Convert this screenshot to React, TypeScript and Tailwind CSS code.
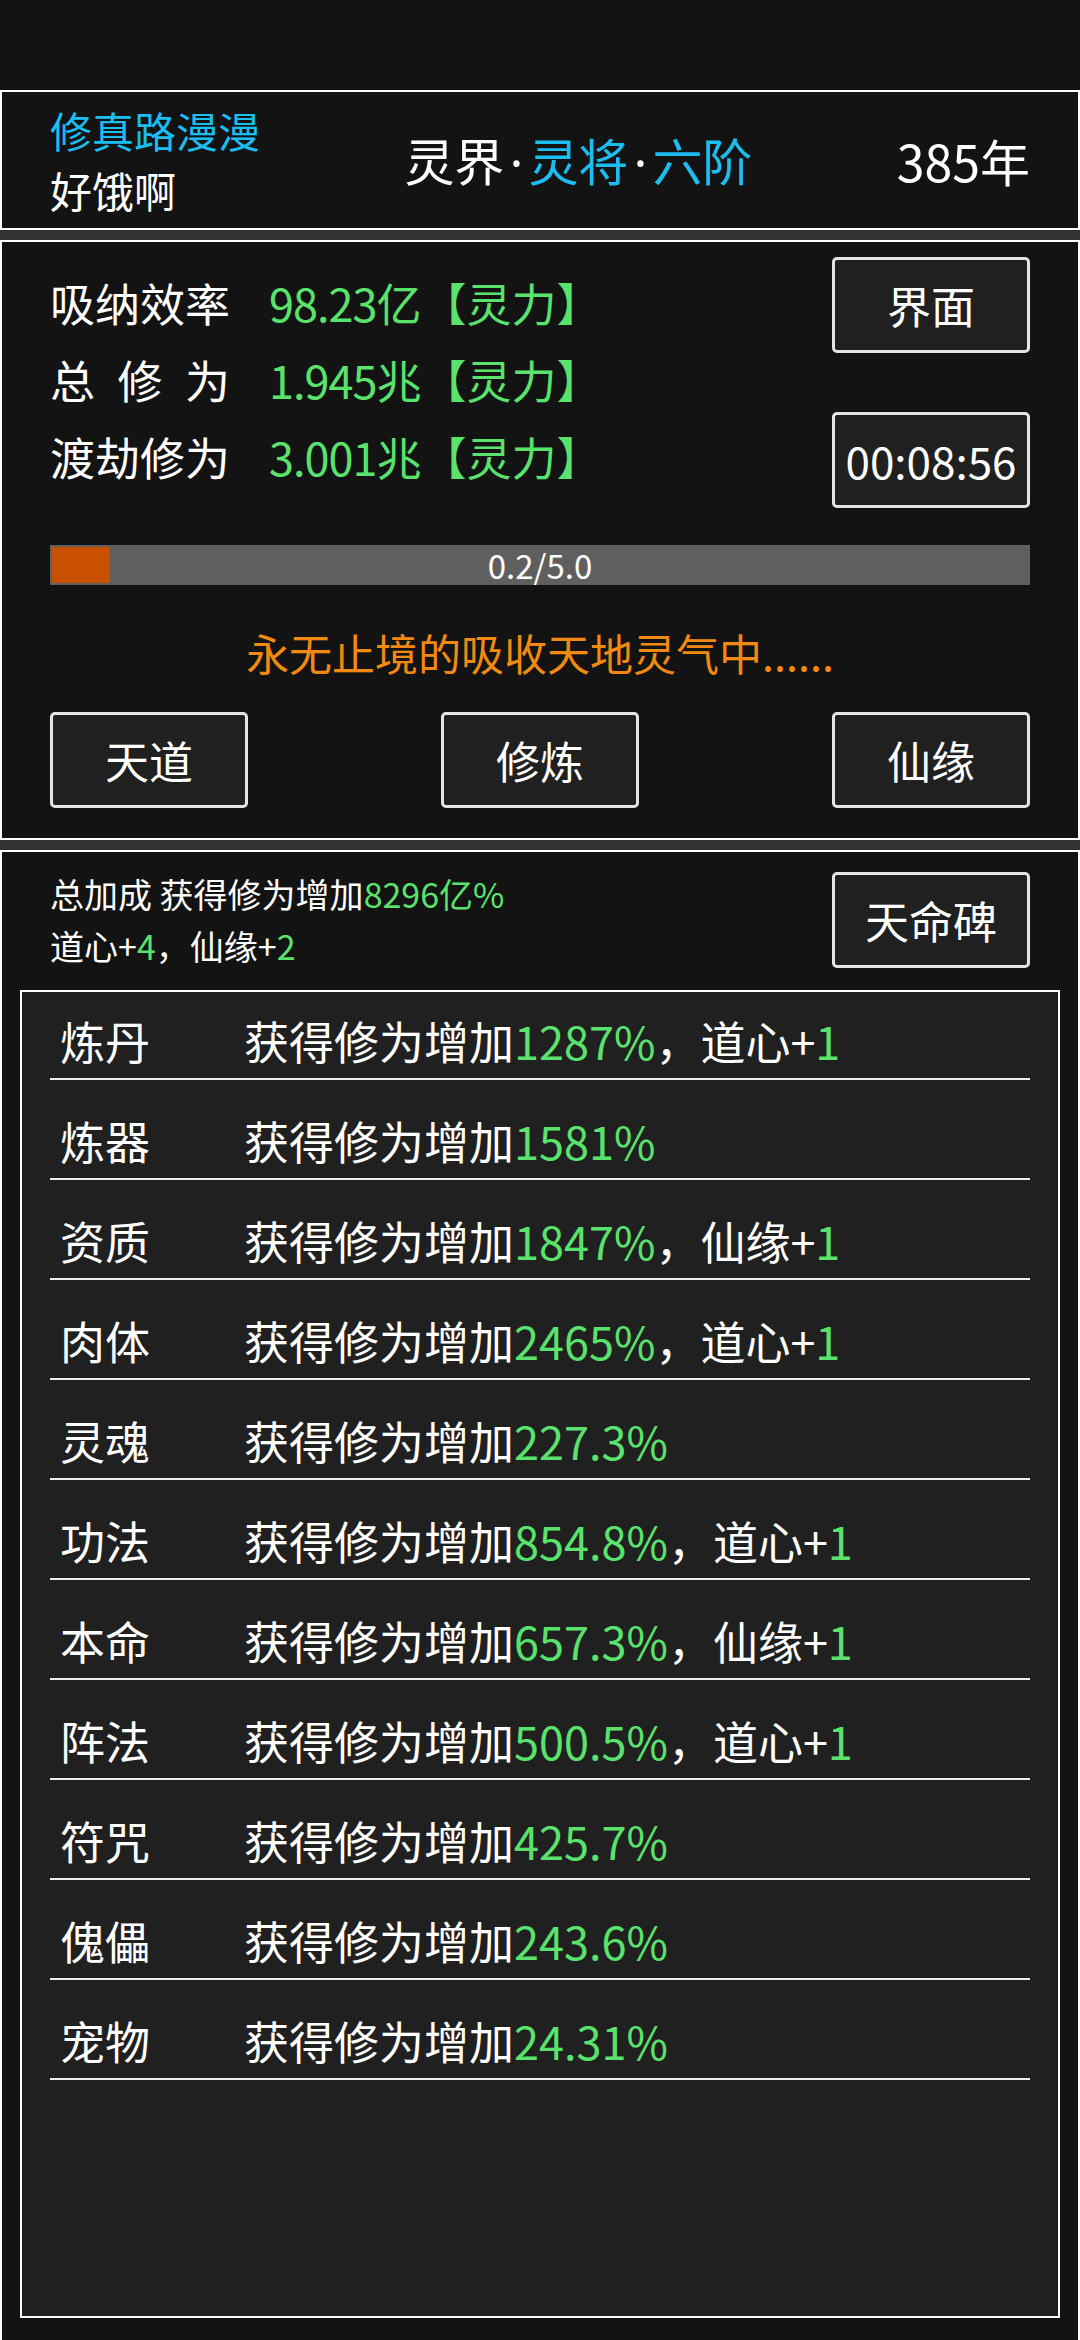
const G = "text-[#5ae36c]";

type Part = [string, boolean];

const rows: { name: string; parts: Part[] }[] = [
  { name: "炼丹", parts: [["1287%", true], ["，道心+", false], ["1", true]] },
  { name: "炼器", parts: [["1581%", true]] },
  { name: "资质", parts: [["1847%", true], ["，仙缘+", false], ["1", true]] },
  { name: "肉体", parts: [["2465%", true], ["，道心+", false], ["1", true]] },
  { name: "灵魂", parts: [["227.3%", true]] },
  { name: "功法", parts: [["854.8%", true], ["，道心+", false], ["1", true]] },
  { name: "本命", parts: [["657.3%", true], ["，仙缘+", false], ["1", true]] },
  { name: "阵法", parts: [["500.5%", true], ["，道心+", false], ["1", true]] },
  { name: "符咒", parts: [["425.7%", true]] },
  { name: "傀儡", parts: [["243.6%", true]] },
  { name: "宠物", parts: [["24.31%", true]] },
];

function Btn({ children, className = "" }: { children: React.ReactNode; className?: string }) {
  return (
    <div
      className={`w-[198px] h-[96px] rounded-[5px] border-[3px] border-[#e4e4e4] bg-[#202020] flex items-center justify-center text-white text-[44px] ${className}`}
    >
      {children}
    </div>
  );
}

function Stat({ label, value, unit }: { label: React.ReactNode; value: string; unit: string }) {
  return (
    <div className="flex items-center h-[77px]">
      <div className="w-[219px] text-white">{label}</div>
      <span className={G}>
        <span className="tracking-[-1px]">{value}</span>
        {unit}【灵力】
      </span>
    </div>
  );
}

function Dot() {
  return <span className="inline-block w-[24px] text-center font-['Noto_Sans',sans-serif]">·</span>;
}

export default function App() {
  return (
    <div className="w-[1080px] h-[2340px] overflow-hidden bg-[#121212] font-['Noto_Sans_CJK_SC','Noto_Sans',sans-serif] leading-none">
      <div className="h-[90px]" />

      {/* header */}
      <div className="h-[140px] border-2 border-white bg-[#131313] px-[48px] flex items-center justify-between">
        <div className="text-[42px] leading-[60px]">
          <div className="text-[#1cbdf0]">修真路漫漫</div>
          <div className="text-white">好饿啊</div>
        </div>
        <div className="text-[50px] text-white">
          灵界<Dot />
          <span className="text-[#1cbdf0]">灵将</span>
          <Dot />
          <span className="text-[#1cbdf0]">六阶</span>
        </div>
        <div className="text-[50px] text-white">385年</div>
      </div>

      <div className="h-[10px] bg-[#333333]" />

      {/* cultivation panel */}
      <div className="h-[600px] border-2 border-white bg-[#131313] px-[48px] pt-[15px]">
        <div className="flex justify-between">
          <div className="pt-[7px] text-[45px]">
            <Stat label="吸纳效率" value="98.23" unit="亿" />
            <Stat
              label={
                <div className="flex justify-between w-[180px]">
                  <span>总</span>
                  <span>修</span>
                  <span>为</span>
                </div>
              }
              value="1.945"
              unit="兆"
            />
            <Stat label="渡劫修为" value="3.001" unit="兆" />
          </div>
          <div className="flex flex-col gap-[59px]">
            <Btn>界面</Btn>
            <Btn>00:08:56</Btn>
          </div>
        </div>

        <div className="relative mt-[37px] h-[40px] bg-[#5f5f5f] p-[2px]">
          <div className="h-full w-[58px] bg-[#c85000]" />
          <div className="absolute inset-0 flex items-center justify-center text-white text-[33px]">0.2/5.0</div>
        </div>

        <div className="mt-[37px] text-center text-[43px] leading-[60px] text-[#f28a12]">
          永无止境的吸收天地灵气中......
        </div>

        <div className="mt-[30px] flex justify-between">
          <Btn>天道</Btn>
          <Btn>修炼</Btn>
          <Btn>仙缘</Btn>
        </div>
      </div>

      <div className="h-[10px] bg-[#333333]" />

      {/* bonus panel */}
      <div className="h-[1500px] border-x-2 border-t-2 border-white bg-[#131313]">
        <div className="pt-[16px] px-[48px] flex items-center justify-between">
          <div className="text-[34px] leading-[52px] text-white">
            <div>
              总加成 获得修为增加<span className={G}>8296亿%</span>
            </div>
            <div>
              道心+<span className={G}>4</span>，仙缘+<span className={G}>2</span>
            </div>
          </div>
          <Btn>天命碑</Btn>
        </div>

        <div className="mt-[18px] mx-[18px] h-[1328px] border-2 border-white bg-[#202020] px-[28px] pt-[18px] flex flex-col gap-[30px]">
          {rows.map((r) => (
            <div key={r.name}>
              <div className="flex items-center h-[60px] text-[45px] text-white">
                <div className="w-[194px] pl-[10px]">{r.name}</div>
                <div>
                  获得修为增加
                  {r.parts.map(([t, green], i) => (
                    <span key={i} className={green ? G : ""}>
                      {t}
                    </span>
                  ))}
                </div>
              </div>
              <div className="mt-[8px] h-[2px] bg-[#ececec]" />
            </div>
          ))}
        </div>
      </div>
    </div>
  );
}
